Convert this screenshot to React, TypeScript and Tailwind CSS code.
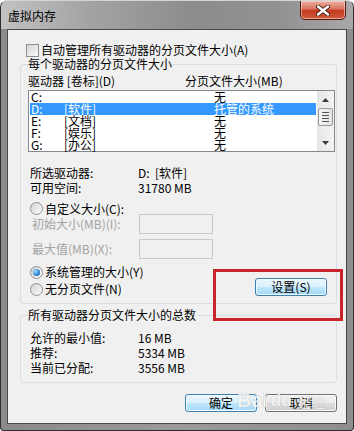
import React from "react";

const font = "font-['Noto_Sans_CJK_SC',sans-serif]";

function Radio({ checked }: { checked?: boolean }) {
  return (
    <span className="flex items-center justify-center w-[13px] h-[13px] shrink-0 rounded-full border border-[#8e8f8f] bg-[linear-gradient(135deg,#d3d3d3,#fcfcfc)]">
      {checked && (
        <span className="w-[7px] h-[7px] rounded-full bg-[radial-gradient(circle_at_35%_35%,#a6e0ff,#2a7fd4_60%,#0d4f9e)]" />
      )}
    </span>
  );
}

function GlassButton({ label, w = "w-[72px]" }: { label: string; w?: string }) {
  return (
    <div
      className={`${w} h-[18px] flex items-center justify-center rounded-[3px] border border-[#3c7fb1] bg-[linear-gradient(#eaf6fd,#d9f0fc_50%,#bee6fd_50%,#a7d9f5)] shadow-[inset_0_0_0_1px_#f4fbfe]`}
    >
      {label}
    </div>
  );
}

function PlainButton({ label }: { label: string }) {
  return (
    <div className="w-[72px] h-[18px] flex items-center justify-center rounded-[3px] border border-[#707070] bg-[linear-gradient(#f2f2f2,#ebebeb_50%,#dddddd_50%,#cfcfcf)] shadow-[inset_0_0_0_1px_#fcfcfc]">
      {label}
    </div>
  );
}

const drives = [
  { d: "C:", label: "", size: "无" },
  { d: "D:", label: "[软件]", size: "托管的系统", selected: true },
  { d: "E:", label: "[文档]", size: "无" },
  { d: "F:", label: "[娱乐]", size: "无" },
  { d: "G:", label: "[办公]", size: "无" },
];

export default function App() {
  return (
    <div
      className={`relative w-[354px] h-[431px] flex flex-col overflow-hidden rounded-t-[7px] rounded-b-[4px] border border-[#2e2e2e] border-t-[#d4d4d4] bg-[linear-gradient(90deg,#8a8a8a,#9a9a9a_50%,#8e8e8e)] text-[12px] leading-[14px] text-black ${font}`}
    >
      {/* Title bar */}
      <div className="h-[28px] shrink-0 flex items-start justify-between bg-[linear-gradient(90deg,#c2c2c2,#a3a3a3_25%,#8c8c8c_55%,#929292_80%,#a8a8a8)]">
        <span className="pl-[7px] pt-[8px]">虚拟内存</span>
        <div className="mt-[-1px] mr-[7px] w-[46px] h-[20px] flex items-center justify-center rounded-b-[5px] border border-[#4d1910] bg-[linear-gradient(#eab0a2,#d8735c_45%,#c23a20_52%,#cf5a3e)] shadow-[inset_0_0_0_1px_rgba(255,220,210,0.6)]">
          <svg width="14" height="11" viewBox="0 0 14 11">
            <path d="M2 1.5 L12 9.5 M12 1.5 L2 9.5" stroke="#4a1a12" strokeWidth="4.2" strokeLinecap="round" />
            <path d="M2 1.5 L12 9.5 M12 1.5 L2 9.5" stroke="#ffffff" strokeWidth="2.4" strokeLinecap="round" />
          </svg>
        </div>
      </div>

      {/* Client area */}
      <div className="flex-1 mx-[6px] mb-[6px] flex flex-col border border-[#4a4a4a] bg-[#f0f0f0]">
        <div className="mt-[13px] ml-[18px] h-[14px] flex items-center gap-[2px]">
          <span className="w-[13px] h-[13px] border border-[#8e8f8f] bg-[linear-gradient(135deg,#d3d3d3,#fbfbfb)]" />
          <span>自动管理所有驱动器的分页文件大小(A)</span>
        </div>

        <fieldset className="ml-[12px] mr-[9px] pl-[7px] pr-[1px] pb-[7px] border border-[#d5dfe5] rounded-[3px]">
          <legend className="h-[14px] pr-[1px]">每个驱动器的分页文件大小</legend>
          <div className="mt-[3px] h-[14px] flex">
            <span className="w-[157px]">驱动器 [卷标](D)</span>
            <span>分页文件大小(MB)</span>
          </div>
          <div className="mt-[2px] h-[62px] flex border border-[#828790] bg-white">
            <div className="flex-1 px-[1px]">
              {drives.map((r) => (
                <div
                  key={r.d}
                  className={`h-[12px] leading-[12px] flex ${r.selected ? "bg-[#3399ff] text-white" : ""}`}
                >
                  <span className="w-[34px] pl-[1px]">{r.d}</span>
                  <span className="w-[150px]">{r.label}</span>
                  <span>{r.size}</span>
                </div>
              ))}
            </div>
            <div className="w-[17px] flex flex-col bg-[linear-gradient(90deg,#e6e6e6,#f4f4f4)]">
              <div className="h-[17px] flex items-center justify-center">
                <svg width="7" height="4" viewBox="0 0 7 4">
                  <path d="M0 4 L3.5 0 L7 4 Z" fill="#3c3c3c" />
                </svg>
              </div>
              <div className="mx-[1px] h-[18px] flex flex-col items-center justify-center gap-[2px] rounded-[2px] border border-[#9a9a9a] bg-[linear-gradient(90deg,#f4f4f4,#e2e2e2)]">
                <span className="w-[7px] h-[1px] bg-[#555]" />
                <span className="w-[7px] h-[1px] bg-[#555]" />
                <span className="w-[7px] h-[1px] bg-[#555]" />
                <span className="w-[7px] h-[1px] bg-[#555]" />
              </div>
              <div className="flex-1" />
              <div className="h-[17px] flex items-center justify-center">
                <svg width="7" height="4" viewBox="0 0 7 4">
                  <path d="M0 0 L3.5 4 L7 0 Z" fill="#3c3c3c" />
                </svg>
              </div>
            </div>
          </div>

          <div className="mt-[14px] h-[14px] pl-[2px] flex">
            <span className="w-[108px]">所选驱动器:</span>
            <span>D:&nbsp;&nbsp;[软件]</span>
          </div>
          <div className="mt-[1px] h-[14px] pl-[2px] flex">
            <span className="w-[108px]">可用空间:</span>
            <span>31780 MB</span>
          </div>

          <div className="mt-[8px] h-[11px] pl-[2px] flex items-center gap-[2px]">
            <Radio />
            <span>自定义大小(C):</span>
          </div>
          <div className="h-[20px] pl-[4px] flex items-center text-[#a3a3a3]">
            <span className="w-[107px]">初始大小(MB)(I):</span>
            <span className="w-[74px] h-[20px] border border-[#c9c9c9] bg-[#f0f0f0]" />
          </div>
          <div className="mt-[5px] h-[20px] pl-[4px] flex items-center text-[#a3a3a3]">
            <span className="w-[107px]">最大值(MB)(X):</span>
            <span className="w-[74px] h-[20px] border border-[#c9c9c9] bg-[#f0f0f0]" />
          </div>

          <div className="mt-[6px] flex items-end justify-between">
            <div className="flex flex-col gap-[3px] pl-[2px]">
              <div className="h-[14px] flex items-center gap-[2px]">
                <Radio checked />
                <span>系统管理的大小(Y)</span>
              </div>
              <div className="h-[14px] flex items-center gap-[2px]">
                <Radio />
                <span>无分页文件(N)</span>
              </div>
            </div>
            <div className="mr-[8px]">
              <GlassButton label="设置(S)" />
            </div>
          </div>
        </fieldset>

        <fieldset className="mt-[4px] ml-[12px] mr-[9px] pl-[7px] pr-[1px] pb-[7px] border border-[#d5dfe5] rounded-[3px]">
          <legend className="h-[14px] pr-[1px]">所有驱动器分页文件大小的总数</legend>
          <div className="mt-[8px] flex flex-col pl-[2px]">
            <div className="h-[15px] flex items-center">
              <span className="w-[108px]">允许的最小值:</span>
              <span>16 MB</span>
            </div>
            <div className="h-[15px] flex items-center">
              <span className="w-[108px]">推荐:</span>
              <span>5334 MB</span>
            </div>
            <div className="h-[15px] flex items-center">
              <span className="w-[108px]">当前已分配:</span>
              <span>3556 MB</span>
            </div>
          </div>
        </fieldset>

        <div className="mt-[11px] pr-[9px] flex justify-end gap-[8px]">
          <GlassButton label="确定" />
          <PlainButton label="取消" />
        </div>
      </div>

      {/* highlight box drawn over the dialog */}
      <div className="absolute left-[212px] top-[268px] w-[130px] h-[52px] border-[3px] border-[#c8252b]" />

      {/* watermark */}
      <div className="absolute left-[236px] top-[388px] flex items-end gap-[2px] text-[#f6f6f6] opacity-80 [text-shadow:0_0_1px_#9a9a9a]">
        <span className="text-[20px] leading-[22px] font-bold font-['Liberation_Sans',sans-serif]">Bai</span>
        <span className="text-[18px] leading-[22px] font-bold font-['Liberation_Sans',sans-serif]">du</span>
        <span className="text-[14px] leading-[18px] ml-[3px]">经验</span>
      </div>
    </div>
  );
}
